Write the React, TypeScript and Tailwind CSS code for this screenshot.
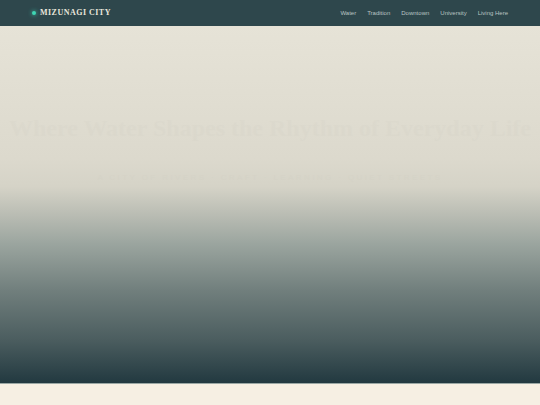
import React from 'react'

const links = ['Water', 'Tradition', 'Downtown', 'University', 'Living Here']

const Header: React.FC = () => {
  return (
    <header className="h-[26px] bg-[#2e474c] flex items-center justify-between px-[32px]">
      <div className="flex items-center gap-[4px]">
        <span className="w-[4px] h-[4px] rounded-full bg-[#3fd6b4] shadow-[0_0_4px_#3fd6b4]"></span>
        <span className="font-['Liberation_Serif',serif] font-bold text-[8px] tracking-[0.06em] text-[#e9e6dc] leading-none">
          MIZUNAGI CITY
        </span>
      </div>
      <nav className="flex items-center gap-[11px]">
        {links.map((l) => (
          <span key={l} className="font-['Liberation_Sans',sans-serif] text-[6px] text-[#b9c4c3] leading-none cursor-pointer">
            {l}
          </span>
        ))}
      </nav>
    </header>
  )
}

const Hero: React.FC = () => {
  return (
    <section className="h-[357px] bg-[linear-gradient(to_bottom,#e6e3d7_0%,#dcd9cd_37%,#d5d3c7_45%,#b9bcb3_53%,#9ba59f_61%,#717f7d_74%,#4b5d5f_88%,#223940_100%)] flex flex-col items-center pt-[90px] px-[6px] overflow-hidden">
      <h1 className="font-['Liberation_Serif',serif] font-bold text-[24px] leading-none whitespace-nowrap text-[#2e474c] opacity-[0.01]">
        Where Water Shapes the Rhythm of Everyday Life
      </h1>
      <p className="mt-[32px] font-['Liberation_Sans',sans-serif] text-[8px] tracking-[0.3em] text-[#2e474c] opacity-[0.012] whitespace-nowrap">
        A CITY OF RIVERS · CRAFT · LEARNING · QUIET STREETS
      </p>
    </section>
  )
}

export default function App() {
  return (
    <div className="w-[540px] h-[405px] overflow-hidden bg-[#f6efe3]">
      <Header />
      <Hero />
      <div className="h-[1px] bg-[#9aa7a4]"></div>
      <main className="h-[22px] bg-[#f6efe3]"></main>
    </div>
  )
}
